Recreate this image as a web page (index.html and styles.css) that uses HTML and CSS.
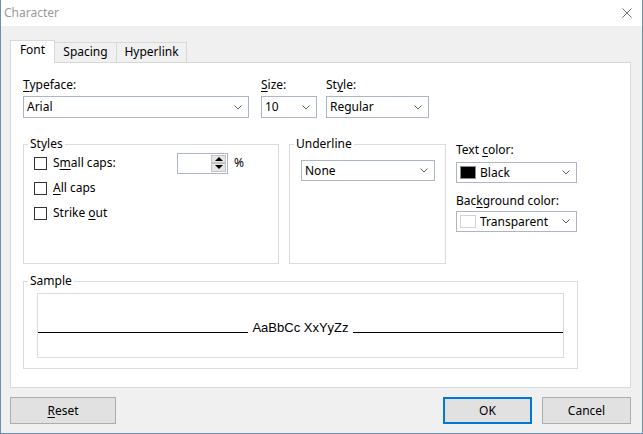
FILE: index.html
```html
<!DOCTYPE html>
<html lang="en">
<head>
  <meta charset="UTF-8">
  <title>Character</title>
  <link rel="stylesheet" href="styles.css">
</head>
<body>
  <div class="window">
    <div class="titlebar">
      <span class="title">Character</span>
      <svg class="close" width="10" height="10" viewBox="0 0 10 10">
        <path d="M0.5 0.5L9.5 9.5M9.5 0.5L0.5 9.5" stroke="#707070" stroke-width="1" fill="none"/>
      </svg>
    </div>

    <div class="client">
      <!-- tab strip -->
      <div class="tabs">
        <div class="tab tab-active">Font</div>
        <div class="tab tab-spacing">Spacing</div>
        <div class="tab tab-link">Hyperlink</div>
      </div>

      <div class="panel">
        <div class="font-row">
          <div class="field field-typeface">
            <label><u>T</u>ypeface:</label>
            <div class="combo">
              <span class="combo-value">Arial</span>
              <svg class="chev" width="8" height="5" viewBox="0 0 8 5"><path d="M0.5 0.5L4 4L7.5 0.5" stroke="#606060" fill="none"/></svg>
            </div>
          </div>
          <div class="field field-size">
            <label><u>S</u>ize:</label>
            <div class="combo">
              <span class="combo-value">10</span>
              <svg class="chev" width="8" height="5" viewBox="0 0 8 5"><path d="M0.5 0.5L4 4L7.5 0.5" stroke="#606060" fill="none"/></svg>
            </div>
          </div>
          <div class="field field-style">
            <label>St<u>y</u>le:</label>
            <div class="combo">
              <span class="combo-value">Regular</span>
              <svg class="chev" width="8" height="5" viewBox="0 0 8 5"><path d="M0.5 0.5L4 4L7.5 0.5" stroke="#606060" fill="none"/></svg>
            </div>
          </div>
        </div>

        <div class="group-row">
          <fieldset class="group group-styles">
            <legend>Styles</legend>
            <div class="check-list">
              <div class="check-row">
                <span class="checkbox"></span>
                <span class="check-label check-label-wide">S<u>m</u>all caps:</span>
                <div class="spin">
                  <div class="spin-buttons">
                    <span class="spin-btn"><span class="tri-up"></span></span>
                    <span class="spin-btn"><span class="tri-down"></span></span>
                  </div>
                </div>
                <span class="percent">%</span>
              </div>
              <div class="check-row">
                <span class="checkbox"></span>
                <span class="check-label"><u>A</u>ll caps</span>
              </div>
              <div class="check-row">
                <span class="checkbox"></span>
                <span class="check-label">Strike <u>o</u>ut</span>
              </div>
            </div>
          </fieldset>

          <fieldset class="group group-underline">
            <legend>Underline</legend>
            <div class="combo combo-underline">
              <span class="combo-value">None</span>
              <svg class="chev" width="8" height="5" viewBox="0 0 8 5"><path d="M0.5 0.5L4 4L7.5 0.5" stroke="#606060" fill="none"/></svg>
            </div>
          </fieldset>

          <div class="colors">
            <label class="label-text-color">Text <u>c</u>olor:</label>
            <div class="combo combo-color">
              <span class="swatch swatch-black"></span>
              <span class="combo-value">Black</span>
              <svg class="chev" width="8" height="5" viewBox="0 0 8 5"><path d="M0.5 0.5L4 4L7.5 0.5" stroke="#606060" fill="none"/></svg>
            </div>
            <label class="label-bg-color">Bac<u>k</u>ground color:</label>
            <div class="combo combo-color combo-bg">
              <span class="swatch swatch-none"></span>
              <span class="combo-value">Transparent</span>
              <svg class="chev" width="8" height="5" viewBox="0 0 8 5"><path d="M0.5 0.5L4 4L7.5 0.5" stroke="#606060" fill="none"/></svg>
            </div>
          </div>
        </div>

        <fieldset class="group group-sample">
          <legend>Sample</legend>
          <div class="sample-box">
            <div class="sample-line">
              <span class="rule"></span>
              <span class="sample-text">AaBbCc XxYyZz</span>
              <span class="rule"></span>
            </div>
          </div>
        </fieldset>
      </div>

      <div class="footer">
        <button class="btn btn-reset"><u>R</u>eset</button>
        <button class="btn btn-ok">OK</button>
        <button class="btn btn-cancel">Cancel</button>
      </div>
    </div>
  </div>
</body>
</html>
```

FILE: styles.css
```css
* {
  box-sizing: border-box;
}

body {
  margin: 0;
  font-family: "Noto Sans", "Open Sans", sans-serif;
  font-size: 12px;
  line-height: 16px;
  color: #000;
}

u {
  text-decoration-thickness: 1px;
  text-underline-offset: 2px;
}

.window {
  width: 643px;
  height: 434px;
  border: 1px solid #6d8db1;
  border-top: none;
  background-color: #f0f0f0;
}

.titlebar {
  height: 26px;
  background-color: #fff;
  display: flex;
  align-items: center;
  justify-content: space-between;
  padding: 0 10px 0 3px;
}

.title {
  color: #9a9a9a;
}

.client {
  padding: 14px 11px 0 9px;
}

/* tabs */
.tabs {
  display: flex;
  align-items: flex-end;
  height: 22px;
}

.tab {
  height: 20px;
  border: 1px solid #d9d9d9;
  border-bottom: none;
  background-color: #f0f0f0;
  text-align: center;
  padding-top: 1px;
  margin-left: -1px;
}

.tab-active {
  position: relative;
  z-index: 1;
  width: 45px;
  height: 23px;
  margin-left: 0;
  margin-bottom: -1px;
  background-color: #fff;
  padding-top: 1px;
}

.tab-spacing {
  width: 63px;
}

.tab-link {
  width: 71px;
}

.panel {
  height: 326px;
  border: 1px solid #d9d9d9;
  background-color: #fff;
  padding: 14px 12px 0 12px;
}

/* first row: typeface / size / style */
.font-row {
  display: flex;
}

.field {
  display: flex;
  flex-direction: column;
}

.field label {
  margin-bottom: 3px;
}

.field-typeface {
  width: 226px;
}

.field-size {
  width: 56px;
  margin-left: 12px;
}

.field-style {
  width: 103px;
  margin-left: 9px;
}

.combo {
  height: 21px;
  border: 1px solid #abb5c6;
  background-color: #fff;
  display: flex;
  align-items: center;
  padding: 0 6px 0 3px;
}

.combo-value {
  flex: 1;
  white-space: nowrap;
}

.font-row .combo {
  height: 22px;
}

.chev {
  flex: none;
}

/* second row: group boxes */
.group-row {
  display: flex;
  margin-top: 18px;
}

.group {
  margin: 0;
  padding: 0;
  min-width: 0;
  border: 1px solid #dcdcdc;
}

.group legend {
  margin-left: 4px;
  padding: 0 2px;
  line-height: 16px;
}

.group-styles {
  width: 256px;
  height: 128px;
}

.check-list {
  padding-left: 10px;
  margin-top: -1px;
}

.check-row {
  display: flex;
  align-items: center;
  height: 24px;
  margin-bottom: 1px;
}

.checkbox {
  width: 13px;
  height: 13px;
  border: 1px solid #333;
  background-color: #fff;
  margin-right: 6px;
}

.check-label-wide {
  width: 124px;
}

.spin {
  width: 51px;
  height: 21px;
  border: 1px solid #abb5c6;
  display: flex;
  justify-content: flex-end;
  padding: 1px;
}

.spin-buttons {
  display: flex;
  flex-direction: column;
  width: 15px;
}

.spin-btn {
  flex: 1;
  background-color: #e6e6e6;
  border: 1px solid #c4c4c4;
  display: flex;
  align-items: center;
  justify-content: center;
}

.tri-up {
  width: 0;
  height: 0;
  border-left: 4px solid transparent;
  border-right: 4px solid transparent;
  border-bottom: 4px solid #000;
}

.tri-down {
  width: 0;
  height: 0;
  border-left: 4px solid transparent;
  border-right: 4px solid transparent;
  border-top: 4px solid #000;
}

.percent {
  margin-left: 6px;
}

.group-underline {
  width: 157px;
  height: 128px;
  margin-left: 10px;
}

.combo-underline {
  margin: 8px 10px 0 11px;
}

.colors {
  width: 121px;
  margin-left: 10px;
  display: flex;
  flex-direction: column;
}

.label-text-color {
  margin-top: 6px;
}

.combo-color {
  margin-top: 4px;
  padding-left: 3px;
}

.label-bg-color {
  margin-top: 10px;
}

.combo-bg {
  margin-top: 2px;
}

.swatch {
  flex: none;
  width: 16px;
  height: 13px;
  margin-right: 4px;
}

.swatch-black {
  background-color: #000;
  border: 1px solid #8a8a8a;
}

.swatch-none {
  background-color: #fff;
  border: 1px solid #d4d4d4;
}

/* sample */
.group-sample {
  width: 555px;
  height: 96px;
  margin-top: 9px;
}

.sample-box {
  height: 65px;
  margin: 4px 13px 0 13px;
  border: 1px solid #dcdcdc;
  padding-top: 26px;
}

.sample-line {
  display: flex;
  align-items: flex-end;
}

.rule {
  flex: 1;
  border-bottom: 1px solid #000;
  margin-bottom: 2px;
}

.sample-text {
  font-family: "Liberation Sans", Arial, sans-serif;
  font-size: 13px;
  line-height: 15px;
  padding: 0 4px;
}

/* buttons */
.footer {
  display: flex;
  margin-top: 9px;
}

.btn {
  height: 27px;
  font-family: inherit;
  font-size: 12px;
  color: #000;
  background-color: #e1e1e1;
  border: 1px solid #adadad;
  padding: 0;
}

.btn-reset {
  width: 106px;
}

.btn-ok {
  width: 89px;
  margin-left: auto;
  border: 2px solid #0078d7;
}

.btn-cancel {
  width: 89px;
  margin-left: 10px;
}
```
